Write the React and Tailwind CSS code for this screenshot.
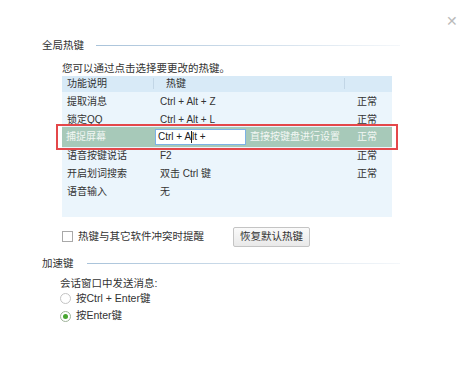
import React from "react";

const font = { fontFamily: '"Liberation Sans", "Noto Sans CJK SC", sans-serif' };

const rows = [
  { name: "提取消息", key: "Ctrl + Alt + Z", state: "正常" },
  { name: "锁定QQ", key: "Ctrl + Alt + L", state: "正常" },
  { name: "捕捉屏幕", editing: true, state: "正常" },
  { name: "语音按键说话", key: "F2", state: "正常" },
  { name: "开启划词搜索", key: "双击 Ctrl 键", state: "正常" },
  { name: "语音输入", key: "无", state: "" },
];

const SectionTitle = ({ children, lineClass }) => (
  <div className="flex items-center pl-[42px] pr-[74px]">
    <span className="text-[10.5px] text-[#333]">{children}</span>
    <div className={`h-px flex-1 bg-gradient-to-r from-[#a9c3da] to-[#f4f7fa] ${lineClass}`} />
  </div>
);

const Row = ({ row }) => {
  if (row.editing) {
    // red focus frame overlaps the neighbouring rows
    return (
      <div className="relative z-10 -mx-[6px] -my-[4px] border-2 border-[#e4474a] px-[4px] py-px">
        <div className="flex h-[20px] items-center bg-[#a7c9b9] text-[10px] text-[#f2f7f4]">
          <span className="w-[93px] pl-[4px]">{row.name}</span>
          <div className="flex h-[16px] w-[91px] items-center border border-[#7db2e6] bg-white pl-[2px] text-[#222]">
            Ctrl + A<span className="inline-block h-[12px] w-px bg-[#222]" />lt +
          </div>
          <span className="ml-[4px] w-[105px]">直接按键盘进行设置</span>
          <span className="pl-[2px]">{row.state}</span>
        </div>
      </div>
    );
  }
  return (
    <div className="flex h-[18px] items-center pt-[2px] text-[10px] text-[#333]">
      <span className="w-[98px] pl-[5px]">{row.name}</span>
      <span className="w-[197px]">{row.key}</span>
      <span>{row.state}</span>
    </div>
  );
};

export default function App() {
  return (
    <div className="relative h-[379px] w-[474px] overflow-hidden bg-white" style={font}>
      <span className="absolute right-[16px] top-[11px] text-[14px] text-[#bbb]">✕</span>

      <div className="pt-[38px]">
        <SectionTitle lineClass="ml-[12px]">全局热键</SectionTitle>

        <div className="pl-[62px] pr-[82px]">
          <p className="mt-[7px] text-[10.5px] leading-[14px] text-[#333]">您可以通过点击选择要更改的热键。</p>

          <div className="mt-[1px] h-[141px] bg-[#ebf5fc]">
            <div className="flex h-[16px] items-center bg-[#d8eaf7] text-[10px] text-[#333]">
              <span className="w-[91px] pl-[5px]">功能说明</span>
              <span className="h-[11px] w-px bg-[#c2d6e6]" />
              <span className="w-[190px] pl-[12px]">热键</span>
              <span className="h-[11px] w-px bg-[#c2d6e6]" />
            </div>
            {rows.map((row) => (
              <Row key={row.name} row={row} />
            ))}
          </div>

          <div className="mt-[10px] flex items-center">
            <span className="h-[11px] w-[11px] border border-[#a9a9a9] bg-white" />
            <span className="ml-[5px] w-[155px] text-[10.5px] text-[#333]">热键与其它软件冲突时提醒</span>
            <button className="flex h-[20px] w-[77px] items-center justify-center rounded-[2px] border border-[#c4c4c4] bg-gradient-to-b from-[#fafafa] to-[#e9e9e9] text-[10.5px] text-[#333]">
              恢复默认热键
            </button>
          </div>
        </div>

        <div className="mt-[9px]">
          <SectionTitle lineClass="ml-[13px]">加速键</SectionTitle>
        </div>

        <div className="pl-[60px]">
          <p className="mt-[4px] text-[10.5px] leading-[14px] text-[#333]">会话窗口中发送消息:</p>
          <div className="mt-[1px] flex items-center text-[10.5px] text-[#333]">
            <span className="h-[11px] w-[11px] rounded-full border border-[#c4c4c4] bg-white" />
            <span className="ml-[5px]">按Ctrl + Enter键</span>
          </div>
          <div className="mt-[2px] flex items-center text-[10.5px] text-[#333]">
            <span className="flex h-[11px] w-[11px] items-center justify-center rounded-full border border-[#9fb39a] bg-white">
              <span className="h-[5px] w-[5px] rounded-full bg-[#47a530]" />
            </span>
            <span className="ml-[5px]">按Enter键</span>
          </div>
        </div>
      </div>
    </div>
  );
}
